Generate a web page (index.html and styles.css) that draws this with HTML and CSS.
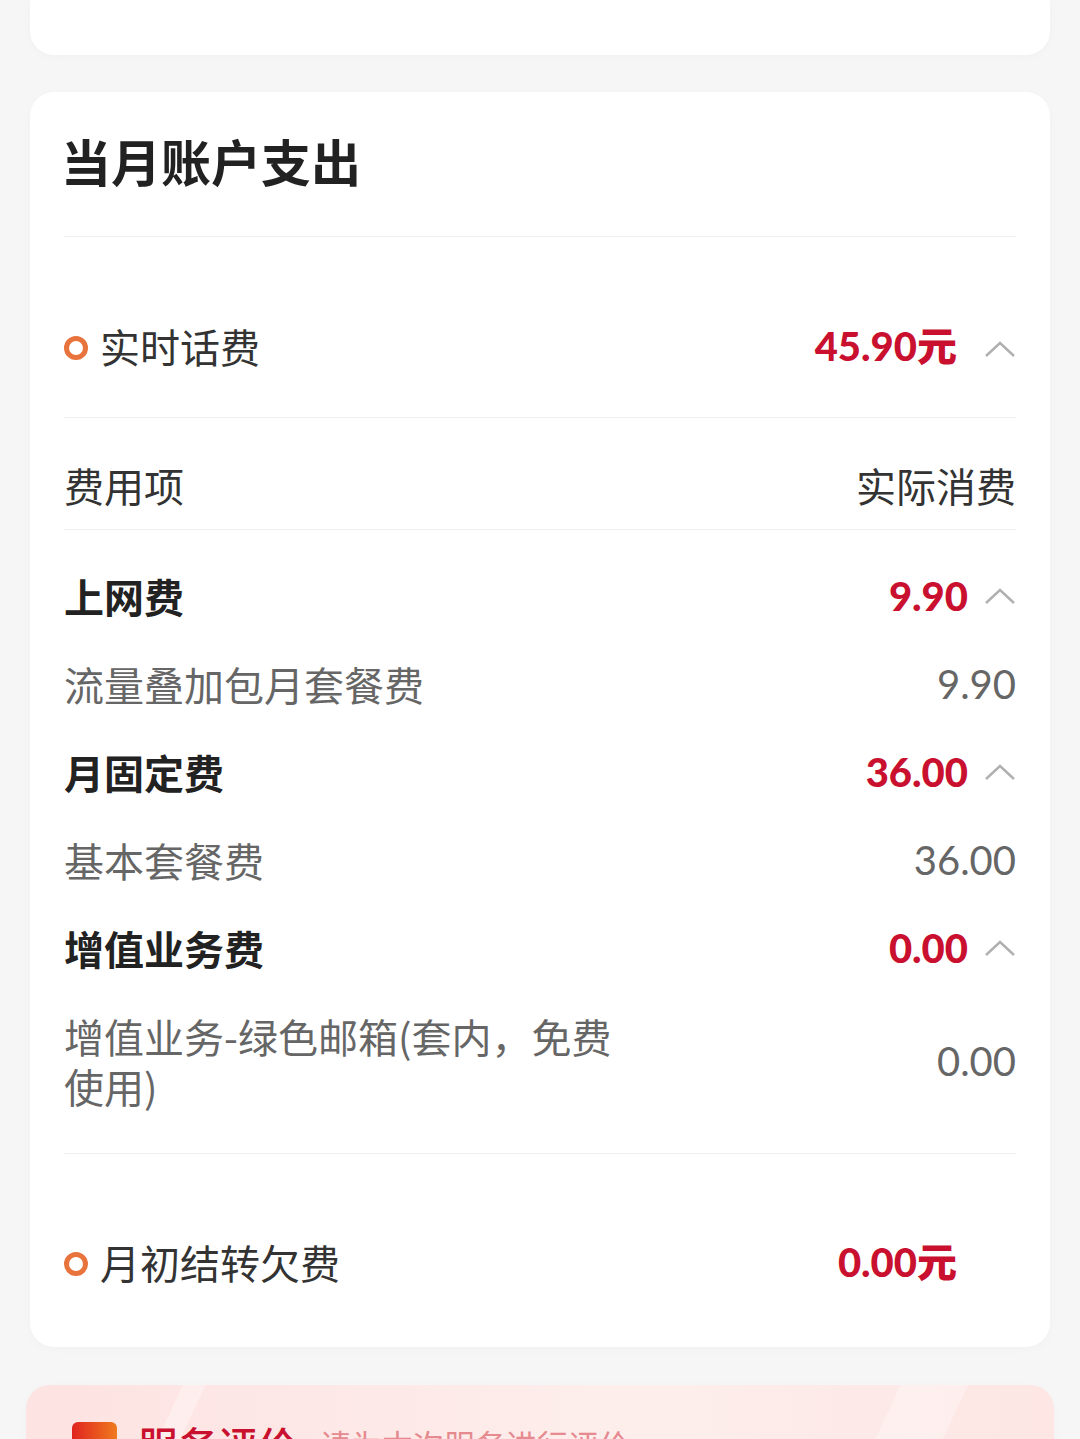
FILE: index.html
```html
<!DOCTYPE html>
<html lang="zh-CN">
<head>
<meta charset="utf-8">
<title>当月账户支出</title>
<link rel="stylesheet" href="styles.css">
</head>
<body>
<div class="page">
  <div class="card card-top"></div>

  <div class="card main">
    <h2 class="title">当月账户支出</h2>

    <div class="sec-row">
      <span class="ring"></span>
      <span class="sec-label">实时话费</span>
      <span class="sec-amount">45.90元</span>
      <span class="chev-slot wide">
        <svg class="chev" width="32" height="18" viewBox="0 0 32 18"><polyline points="2,16 16,3 30,16" fill="none" stroke="#b0b0b0" stroke-width="2.4"/></svg>
      </span>
    </div>

    <div class="thead">
      <span>费用项</span>
      <span>实际消费</span>
    </div>

    <div class="list">
      <div class="row group">
        <span class="lbl">上网费</span>
        <span class="val red">9.90</span>
        <span class="chev-slot"><svg class="chev" width="32" height="18" viewBox="0 0 32 18"><polyline points="2,16 16,3 30,16" fill="none" stroke="#b0b0b0" stroke-width="2.4"/></svg></span>
      </div>
      <div class="row item">
        <span class="lbl">流量叠加包月套餐费</span>
        <span class="val">9.90</span>
      </div>
      <div class="row group">
        <span class="lbl">月固定费</span>
        <span class="val red">36.00</span>
        <span class="chev-slot"><svg class="chev" width="32" height="18" viewBox="0 0 32 18"><polyline points="2,16 16,3 30,16" fill="none" stroke="#b0b0b0" stroke-width="2.4"/></svg></span>
      </div>
      <div class="row item">
        <span class="lbl">基本套餐费</span>
        <span class="val">36.00</span>
      </div>
      <div class="row group">
        <span class="lbl">增值业务费</span>
        <span class="val red">0.00</span>
        <span class="chev-slot"><svg class="chev" width="32" height="18" viewBox="0 0 32 18"><polyline points="2,16 16,3 30,16" fill="none" stroke="#b0b0b0" stroke-width="2.4"/></svg></span>
      </div>
      <div class="row item">
        <span class="lbl narrow">增值业务-绿色邮箱(套内，免费使用)</span>
        <span class="val">0.00</span>
      </div>
    </div>

    <div class="sec-row last">
      <span class="ring"></span>
      <span class="sec-label">月初结转欠费</span>
      <span class="sec-amount">0.00元</span>
      <span class="chev-slot wide"></span>
    </div>
  </div>

  <div class="card rate">
    <div class="rate-head">
      <span class="rate-icon"></span>
      <span class="rate-title">服务评价</span>
      <span class="rate-sub">请为本次服务进行评价</span>
    </div>
  </div>
</div>
</body>
</html>
```

FILE: styles.css
```css
* { box-sizing: border-box; }
html, body {
  margin: 0;
  padding: 0;
  background: #f6f6f6;
  font-family: "Noto Sans CJK SC", "Noto Sans", sans-serif;
  color: #333;
}
.page {
  height: 1439px;
  overflow: hidden;
  display: flex;
  flex-direction: column;
}
.card {
  background: #fff;
  border-radius: 24px;
  margin: 0 30px;
  box-shadow: 0 2px 10px rgba(0,0,0,0.025);
}
.card-top {
  height: 55px;
  border-radius: 0 0 24px 24px;
  margin-bottom: 37px;
  flex: none;
}
.main {
  padding: 0 34px;
  flex: none;
}
.title {
  margin: 0;
  height: 145px;
  display: flex;
  align-items: center;
  font-size: 50px;
  font-weight: 700;
  color: #222;
  border-bottom: 1px solid #eeeeee;
  padding-bottom: 9px;
  text-indent: -3px;
}
.sec-row {
  display: flex;
  align-items: center;
  padding: 84px 0 47px;
  height: 181px;
  border-bottom: 1px solid #eeeeee;
}
.sec-row.last {
  border-bottom: none;
  padding: 83px 0 60px;
  height: auto;
}
.ring {
  width: 24px;
  height: 24px;
  border: 5px solid #e8733c;
  border-radius: 50%;
  margin-right: 12px;
  margin-top: 4px;
  flex: none;
}
.sec-label {
  font-size: 40px;
  line-height: 50px;
  color: #333;
  flex: 1;
}
.sec-amount {
  font-family: Lato, "Noto Sans CJK SC", sans-serif;
  font-weight: 900;
  font-size: 40px;
  line-height: 50px;
  color: #c9102f;
}
.chev-slot {
  width: 48px;
  flex: none;
  display: flex;
  justify-content: flex-end;
  align-items: center;
}
.chev-slot.wide {
  width: 59px;
  padding-top: 6px;
}
.chev { display: block; }
.thead {
  display: flex;
  justify-content: space-between;
  font-size: 40px;
  line-height: 48px;
  padding: 43px 0 20px;
  color: #333;
  border-bottom: 1px solid #eeeeee;
}
.list {
  padding: 22px 0 23px;
  border-bottom: 1px solid #eeeeee;
}
.row {
  display: flex;
  align-items: center;
  padding: 19px 0;
}
.lbl {
  flex: 1;
  font-size: 40px;
  line-height: 50px;
}
.group .lbl {
  font-weight: 700;
  color: #222;
}
.item .lbl {
  color: #666;
}
.lbl.narrow {
  flex: none;
  max-width: 572px;
  margin-right: auto;
}
.val {
  font-family: Lato, "Noto Sans CJK SC", sans-serif;
  font-size: 40px;
  line-height: 50px;
  color: #666;
}
.val.red {
  font-weight: 900;
  color: #c9102f;
}
.rate {
  margin: 38px 26px 0;
  height: 200px;
  flex: none;
  background:
    linear-gradient(115deg, transparent 0 14%, rgba(255,255,255,0.35) 14% 16%, transparent 16% 78%, rgba(255,255,255,0.3) 78% 84%, transparent 84%),
    linear-gradient(90deg, #fde3e2, #fdeeec 60%, #fde6e4);
  padding: 34px 46px 0;
}
.rate-head {
  display: flex;
  align-items: center;
}
.rate-icon {
  width: 45px;
  height: 45px;
  border-radius: 6px;
  background: linear-gradient(90deg, #e0231f, #f07a1e);
  margin-right: 21px;
  flex: none;
}
.rate-title {
  font-size: 40px;
  line-height: 50px;
  font-weight: 500;
  color: #c9102f;
  margin-right: 22px;
}
.rate-sub {
  font-size: 31px;
  line-height: 50px;
  color: #e58a8f;
}
```
